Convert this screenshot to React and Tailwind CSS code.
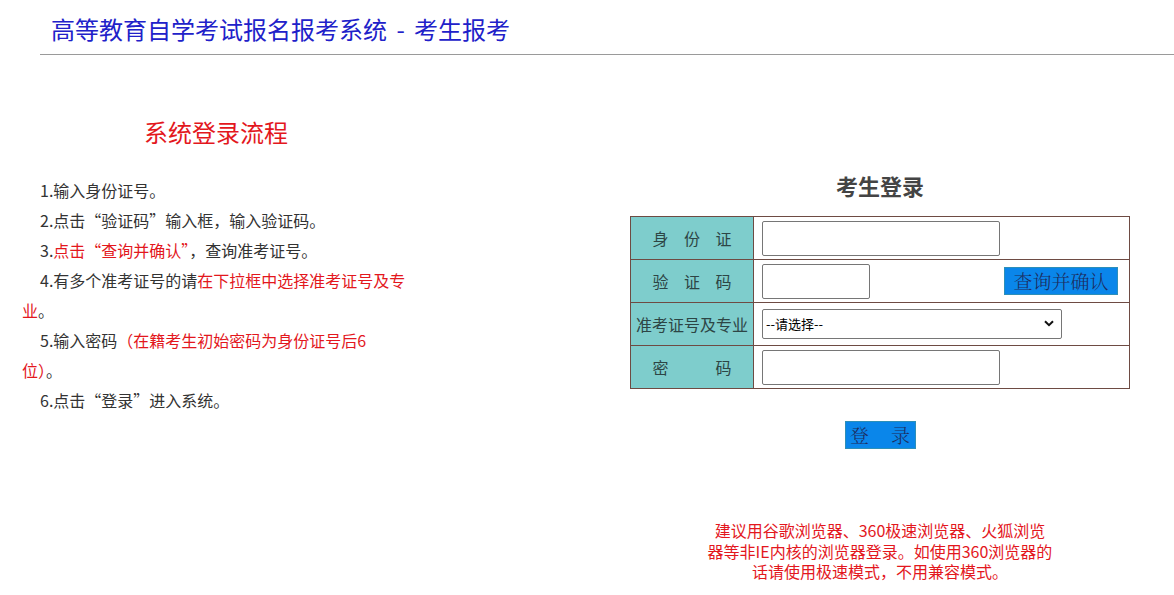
import React from "react";

const sans = { fontFamily: '"Microsoft YaHei", "Noto Sans CJK SC", "Noto Sans", sans-serif' };
const serif = { fontFamily: '"SimSun", "Noto Serif CJK SC", "Noto Sans CJK SC", serif', fontWeight: 300 };

function Label({ chars, wide }) {
  if (wide) {
    return <div className="text-center text-[16px] text-[#2d4545] whitespace-nowrap">{chars}</div>;
  }
  return (
    <div className="mx-auto flex w-[79px] justify-between text-[16px] text-[#2d4545]">
      {chars.split("").map((c, i) => (
        <span key={i}>{c}</span>
      ))}
    </div>
  );
}

export default function App() {
  const red = "text-[#e3171d]";
  return (
    <div className="min-h-[595px] w-[1174px] bg-white text-[#333]" style={sans}>
      <header className="ml-[40px] h-[55px] border-b border-[#9a9a9a] pl-[11px] pt-[11px]">
        <h1 className="text-[24px] leading-[36px] text-[#2121c9] font-normal">
          高等教育自学考试报名报考系统<span className="px-[4px]"> - </span>考生报考
        </h1>
      </header>

      <div className="flex">
        <section className="ml-[22px] w-[388px]">
          <h2 className={`mt-[59px] text-center text-[24px] leading-[36px] font-normal ${red}`}>系统登录流程</h2>
          <div className="mt-[25px] text-[16px] leading-[30px] text-[#333]">
            <p className="indent-[18px]">1.输入身份证号。</p>
            <p className="indent-[18px]">2.点击“验证码”输入框，输入验证码。</p>
            <p className="indent-[18px]">
              3.<span className={red}>点击“查询并确认”</span>，查询准考证号。
            </p>
            <p className="indent-[18px]">
              4.有多个准考证号的请<span className={red}>在下拉框中选择准考证号及专</span>
              <br />
              <span className={red}>业</span>。
            </p>
            <p className="indent-[18px]">
              5.输入密码<span className={red}>（在籍考生初始密码为身份证号后6</span>
              <br />
              <span className={red}>位）</span>。
            </p>
            <p className="indent-[18px]">6.点击“登录”进入系统。</p>
          </div>
        </section>

        <section className="ml-[220px] w-[500px]">
          <h2 className="mt-[116px] text-center text-[22px] leading-[28px] font-bold text-[#444]">考生登录</h2>
          <table className="mt-[17px] w-[500px] border-collapse border border-[#6e4b43]">
            <tbody>
              <tr className="h-[43px]">
                <td className="w-[123px] border border-[#6e4b43] bg-[#7ecdcc] p-0 align-middle">
                  <Label chars="身份证" />
                </td>
                <td className="border border-[#6e4b43] p-0 pl-[8px] align-middle">
                  <input className="block h-[35px] w-[238px] rounded-[2px] border border-[#767676] bg-white" />
                </td>
              </tr>
              <tr className="h-[43px]">
                <td className="border border-[#6e4b43] bg-[#7ecdcc] p-0 align-middle">
                  <Label chars="验证码" />
                </td>
                <td className="border border-[#6e4b43] p-0 pl-[8px] align-middle">
                  <div className="flex items-center">
                    <input className="block h-[35px] w-[108px] rounded-[2px] border border-[#767676] bg-white" />
                    <button
                      className="ml-[134px] h-[28px] w-[114px] border border-[#2d8fb8] bg-[#0a86ea] text-[19px] leading-[26px] text-[#1d2c5e]"
                      style={serif}
                    >
                      查询并确认
                    </button>
                  </div>
                </td>
              </tr>
              <tr className="h-[43px]">
                <td className="border border-[#6e4b43] bg-[#7ecdcc] p-0 align-middle">
                  <Label chars="准考证号及专业" wide />
                </td>
                <td className="border border-[#6e4b43] p-0 pl-[8px] align-middle">
                  <div className="relative w-[300px]">
                    <select className="block h-[30px] w-[300px] appearance-none rounded-[2px] border border-[#767676] bg-white pl-[3px] text-[13px] text-black">
                      <option>--请选择--</option>
                    </select>
                    <svg
                      className="pointer-events-none absolute right-[8px] top-[11px]"
                      width="10"
                      height="7"
                      viewBox="0 0 10 7"
                    >
                      <path d="M1 1.2 L5 5.2 L9 1.2" fill="none" stroke="#111" strokeWidth="2" />
                    </svg>
                  </div>
                </td>
              </tr>
              <tr className="h-[43px]">
                <td className="border border-[#6e4b43] bg-[#7ecdcc] p-0 align-middle">
                  <Label chars="密码" />
                </td>
                <td className="border border-[#6e4b43] p-0 pl-[8px] align-middle">
                  <input type="password" className="block h-[35px] w-[238px] rounded-[2px] border border-[#767676] bg-white" />
                </td>
              </tr>
            </tbody>
          </table>

          <div className="mt-[32px] flex justify-center">
            <button
              className="flex h-[28px] w-[71px] items-center justify-center gap-[22px] border border-[#2d8fb8] bg-[#0a86ea] text-[19px] text-[#1d2c5e]"
              style={serif}
            >
              <span>登</span>
              <span>录</span>
            </button>
          </div>

          <div className={`mt-[71px] text-center text-[16px] leading-[20.5px] ${red}`}>
            <p className="leading-[20.5px]">建议用谷歌浏览器、360极速浏览器、火狐浏览</p>
            <p className="leading-[20.5px]">器等非IE内核的浏览器登录。如使用360浏览器的</p>
            <p className="leading-[20.5px]">话请使用极速模式，不用兼容模式。</p>
          </div>
        </section>
      </div>
    </div>
  );
}
